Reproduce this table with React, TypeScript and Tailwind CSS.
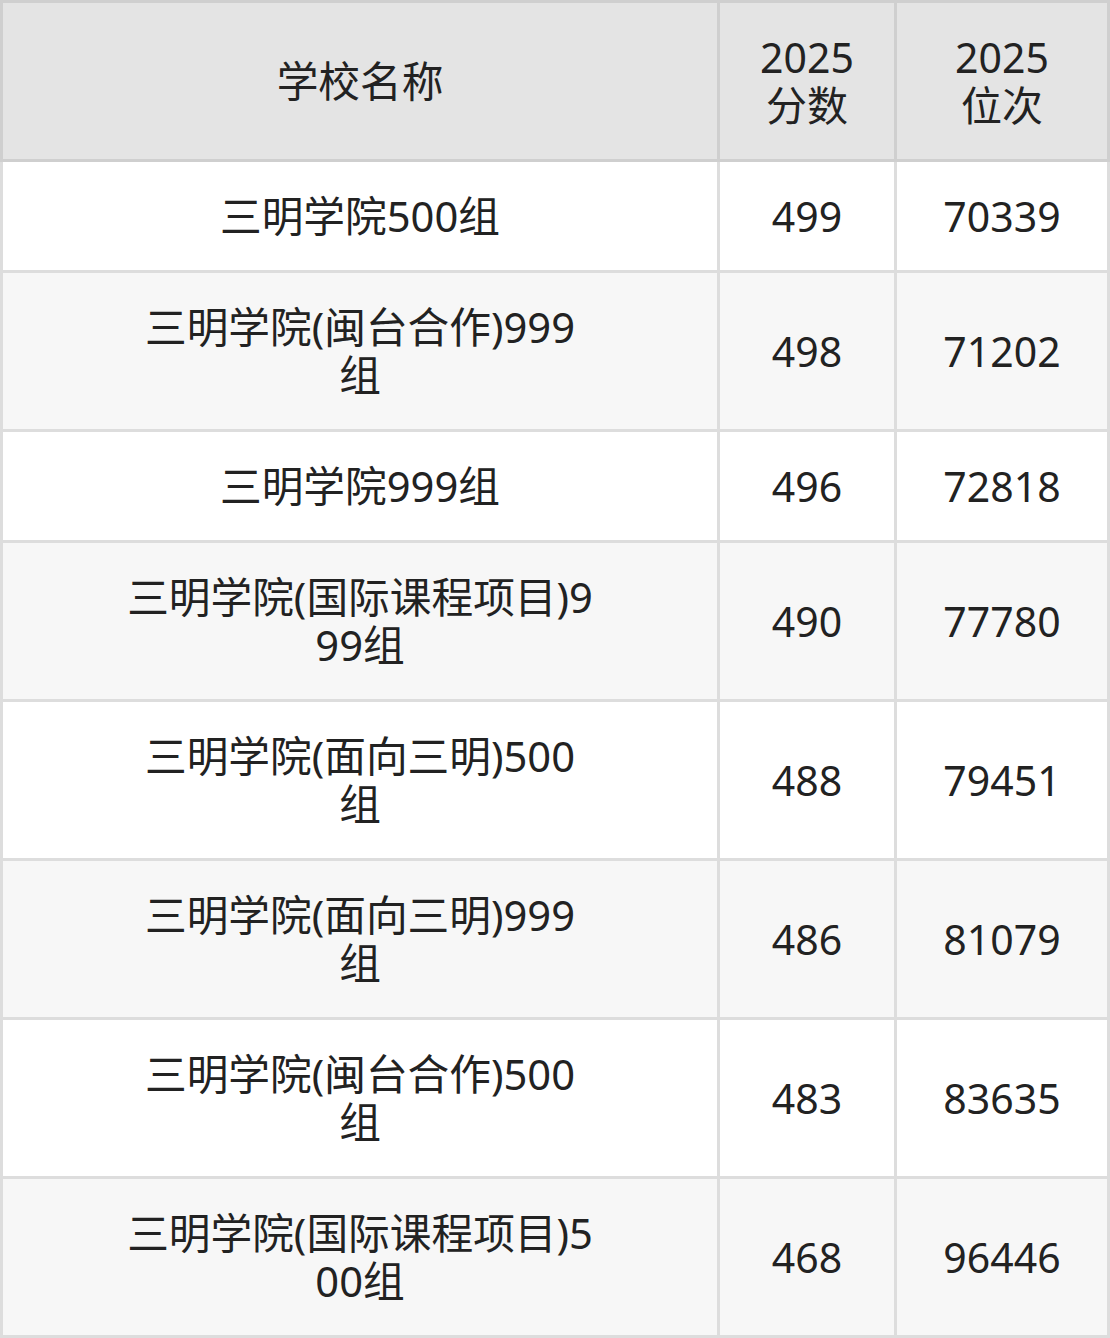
import React from "react";

const rows: { name: string[]; score: string; rank: string }[] = [
  { name: ["三明学院500组"], score: "499", rank: "70339" },
  { name: ["三明学院(闽台合作)999", "组"], score: "498", rank: "71202" },
  { name: ["三明学院999组"], score: "496", rank: "72818" },
  { name: ["三明学院(国际课程项目)9", "99组"], score: "490", rank: "77780" },
  { name: ["三明学院(面向三明)500", "组"], score: "488", rank: "79451" },
  { name: ["三明学院(面向三明)999", "组"], score: "486", rank: "81079" },
  { name: ["三明学院(闽台合作)500", "组"], score: "483", rank: "83635" },
  { name: ["三明学院(国际课程项目)5", "00组"], score: "468", rank: "96446" },
];

function Lines({ lines }: { lines: string[] }) {
  return (
    <>
      {lines.map((l, i) => (
        <div key={i} className="whitespace-nowrap">
          {l}
        </div>
      ))}
    </>
  );
}

export default function App() {
  return (
    <div
      className="w-[1110px] text-[41px] leading-[48px] text-[#222222]"
      style={{ fontFamily: '"Noto Sans", "Noto Sans CJK SC", sans-serif' }}
    >
      <div className="flex bg-[#e4e4e4] border-t-[3px] border-b-[3px] border-[#cfcfcf]">
        <div className="w-[717px] border-l-[3px] border-[#cfcfcf] py-[30px] flex items-center justify-center text-center text-[41.7px]">
          <Lines lines={["学校名称"]} />
        </div>
        <div className="w-[177px] border-l-[3px] border-[#cfcfcf] py-[30px] flex flex-col items-center justify-center text-center">
          <Lines lines={["2025", "分数"]} />
        </div>
        <div className="w-[216px] border-l-[3px] border-r-[3px] border-[#cfcfcf] py-[30px] flex flex-col items-center justify-center text-center">
          <Lines lines={["2025", "位次"]} />
        </div>
      </div>
      {rows.map((r, i) => (
        <div
          key={i}
          className={`flex border-b-[3px] border-[#dddddd] ${i % 2 === 0 ? "bg-white" : "bg-[#f7f7f7]"}`}
        >
          <div className="w-[717px] border-l-[3px] border-[#dddddd] py-[30px] flex flex-col items-center justify-center text-center text-[41.7px]">
            <Lines lines={r.name} />
          </div>
          <div className="w-[177px] border-l-[3px] border-[#dddddd] py-[30px] flex items-center justify-center text-center">
            {r.score}
          </div>
          <div className="w-[216px] border-l-[3px] border-r-[3px] border-[#dddddd] py-[30px] flex items-center justify-center text-center">
            {r.rank}
          </div>
        </div>
      ))}
    </div>
  );
}
